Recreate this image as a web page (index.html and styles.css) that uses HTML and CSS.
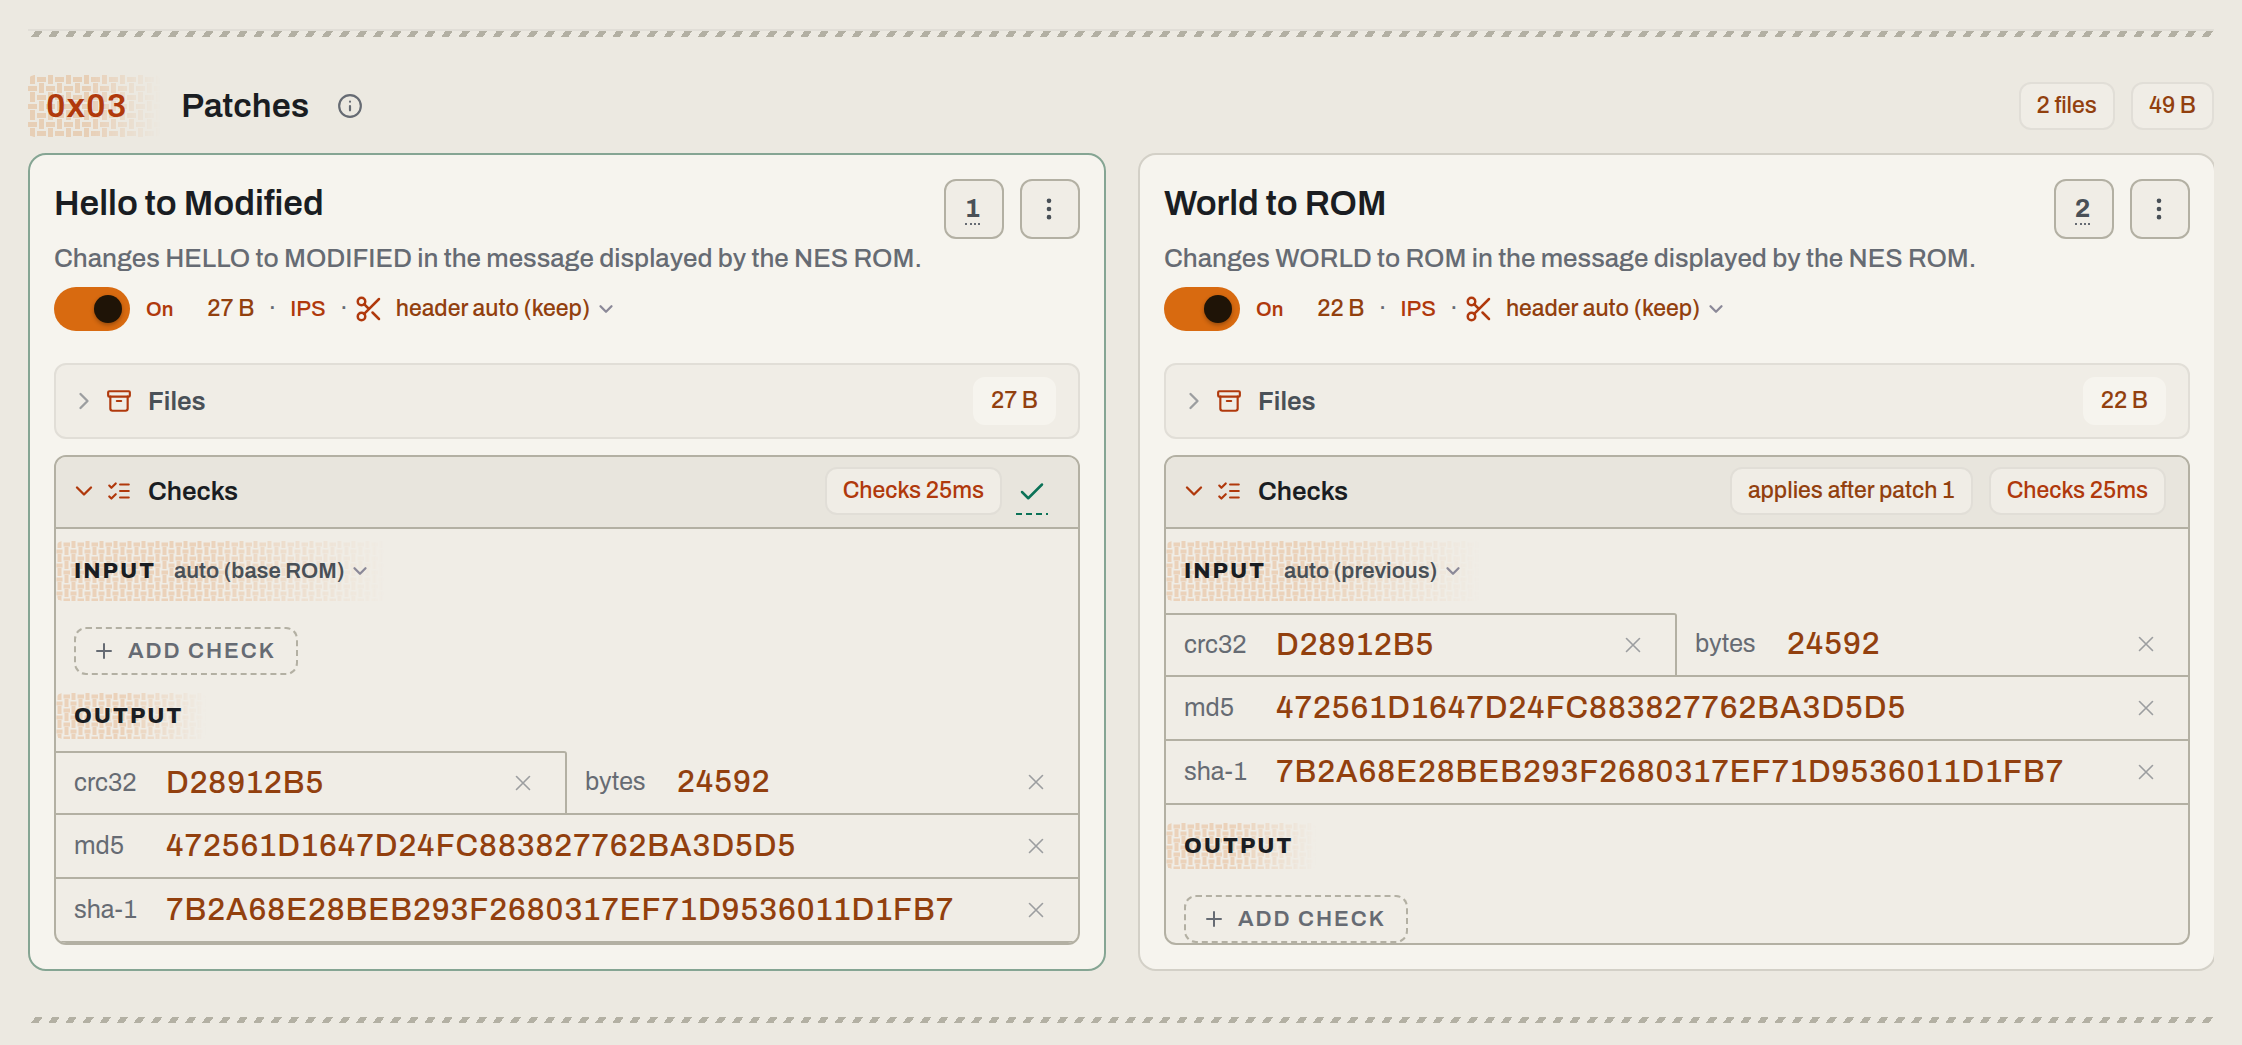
FILE: index.html
```html
<!DOCTYPE html>
<html lang="en">
<head>
    <meta charset="UTF-8">
    <meta name="viewport" content="width=device-width, initial-scale=1">
    <title>Patches</title>
    <link rel="stylesheet" href="styles.css">
</head>
<body>
    <!-- shared icons and the weave pattern -->
    <svg class="defs" aria-hidden="true">
        <defs>
            <pattern id="weave-lg" width="18" height="18" patternUnits="userSpaceOnUse">
                <path class="thread" d="M2 0h5v9H2zM2 17h5v1H2zM9 2h9v5H9zM11 8h5v10h-5zM0 11h9v5H0z"/>
            </pattern>
            <pattern id="weave-sm" width="14" height="14" patternUnits="userSpaceOnUse">
                <path class="thread" d="M1.5 0h4v7h-4zM1.5 13h4v1h-4zM7.5 1.5h6.500v4H7.500zM8.500 6h4v8h-4zM.5 8.500h6v4H.5z"/>
            </pattern>
            <symbol id="i-info" viewBox="0 0 24 24"><circle cx="12" cy="12" r="10"/><path d="M12 16v-4M12 8h.01"/></symbol>
            <symbol id="i-more" viewBox="0 0 24 24"><circle cx="12" cy="12" r="1"/><circle cx="12" cy="5" r="1"/><circle cx="12" cy="19" r="1"/></symbol>
            <symbol id="i-scissors" viewBox="0 0 24 24"><circle cx="6" cy="6" r="3"/><path d="M8.120 8.120 12 12M20 4 8.120 15.880"/><circle cx="6" cy="18" r="3"/><path d="M14.800 14.800 20 20"/></symbol>
            <symbol id="i-down" viewBox="0 0 24 24"><path d="m6 9 6 6 6-6"/></symbol>
            <symbol id="i-right" viewBox="0 0 24 24"><path d="m9 18 6-6-6-6"/></symbol>
            <symbol id="i-archive" viewBox="0 0 24 24"><rect width="20" height="5" x="2" y="3" rx="1"/><path d="M4 8v11a2 2 0 0 0 2 2h12a2 2 0 0 0 2-2V8M10 12h4"/></symbol>
            <symbol id="i-list" viewBox="0 0 24 24"><path d="m3 17 2 2 4-4M3 7l2 2 4-4M13 6h8M13 12h8M13 18h8"/></symbol>
            <symbol id="i-check" viewBox="0 0 24 24"><path d="M20 6 9 17l-5-5"/></symbol>
            <symbol id="i-x" viewBox="0 0 24 24"><path d="M18 6 6 18M6 6l12 12"/></symbol>
            <symbol id="i-plus" viewBox="0 0 24 24"><path d="M5 12h14M12 5v14"/></symbol>
        </defs>
    </svg>

    <main class="page">
        <div class="divider divider-line"></div>

        <section class="patches">
            <header class="section-head">
                <span class="section-no weave-box">
                    <svg class="weave" aria-hidden="true"><rect width="100%" height="100%" fill="url(#weave-lg)"/></svg>
                    <span class="weave-text">0x03</span>
                </span>
                <h2 class="section-title">Patches</h2>
                <button class="info-btn" aria-label="About patches"><svg class="icon icon-26"><use href="#i-info"/></svg></button>
                <div class="badges">
                    <span class="badge">2 files</span>
                    <span class="badge">49 B</span>
                </div>
            </header>

            <div class="cards">
                <article class="card card-active">
                    <div class="card-head">
                        <h3 class="card-title">Hello to Modified</h3>
                        <button class="square-btn"><span class="order">1</span></button>
                        <button class="square-btn" aria-label="More"><svg class="icon icon-28"><use href="#i-more"/></svg></button>
                    </div>
                    <p class="card-desc">Changes HELLO to MODIFIED in the message displayed by the NES ROM.</p>
                    <div class="meta">
                        <input class="switch" type="checkbox" role="switch" id="on-1" checked>
                        <label class="switch-label" for="on-1">On</label>
                        <span>27 B</span>
                        <span class="dot">·</span>
                        <span class="format">IPS</span>
                        <span class="dot">·</span>
                        <svg class="icon icon-30 accent"><use href="#i-scissors"/></svg>
                        <span class="pick">
                            <select aria-label="Header"><option>header auto (keep)</option></select>
                            <svg class="icon icon-22"><use href="#i-down"/></svg>
                        </span>
                    </div>

                    <section class="panel">
                        <div class="panel-head">
                            <button class="panel-toggle">
                                <svg class="icon icon-28 faint"><use href="#i-right"/></svg>
                                <svg class="icon icon-26 accent"><use href="#i-archive"/></svg>
                                <span>Files</span>
                            </button>
                            <span class="badge badge-light">27 B</span>
                        </div>
                    </section>

                    <section class="panel panel-open">
                        <div class="panel-head">
                            <button class="panel-toggle">
                                <svg class="icon icon-28 accent"><use href="#i-down"/></svg>
                                <svg class="icon icon-26 accent"><use href="#i-list"/></svg>
                                <span>Checks</span>
                            </button>
                            <span class="badge badge-time">Checks 25ms</span>
                            <button class="passed" aria-label="Passed"><svg class="icon icon-30"><use href="#i-check"/></svg></button>
                        </div>

                        <div class="group group-input weave-box">
                            <svg class="weave" aria-hidden="true"><rect width="100%" height="100%" fill="url(#weave-sm)"/></svg>
                            <label class="group-name" for="input-1">INPUT</label>
                            <span class="pick pick-sm">
                                <select id="input-1"><option>auto (base ROM)</option></select>
                                <svg class="icon icon-22"><use href="#i-down"/></svg>
                            </span>
                        </div>
                        <button class="add-check"><svg class="icon icon-24"><use href="#i-plus"/></svg>ADD CHECK</button>

                        <div class="group group-output weave-box">
                            <svg class="weave" aria-hidden="true"><rect width="100%" height="100%" fill="url(#weave-sm)"/></svg>
                            <span class="group-name">OUTPUT</span>
                        </div>
                        <dl class="checks">
                            <div class="check check-first"><dt>crc32</dt><dd>D28912B5</dd><button aria-label="Remove crc32"><svg class="icon icon-26"><use href="#i-x"/></svg></button></div>
                            <div class="check check-half"><dt>bytes</dt><dd>24592</dd><button aria-label="Remove bytes"><svg class="icon icon-26"><use href="#i-x"/></svg></button></div>
                            <div class="check"><dt>md5</dt><dd>472561D1647D24FC883827762BA3D5D5</dd><button aria-label="Remove md5"><svg class="icon icon-26"><use href="#i-x"/></svg></button></div>
                            <div class="check"><dt>sha-1</dt><dd>7B2A68E28BEB293F2680317EF71D9536011D1FB7</dd><button aria-label="Remove sha-1"><svg class="icon icon-26"><use href="#i-x"/></svg></button></div>
                        </dl>
                    </section>
                </article>

                <article class="card">
                    <div class="card-head">
                        <h3 class="card-title">World to ROM</h3>
                        <button class="square-btn"><span class="order">2</span></button>
                        <button class="square-btn" aria-label="More"><svg class="icon icon-28"><use href="#i-more"/></svg></button>
                    </div>
                    <p class="card-desc">Changes WORLD to ROM in the message displayed by the NES ROM.</p>
                    <div class="meta">
                        <input class="switch" type="checkbox" role="switch" id="on-2" checked>
                        <label class="switch-label" for="on-2">On</label>
                        <span>22 B</span>
                        <span class="dot">·</span>
                        <span class="format">IPS</span>
                        <span class="dot">·</span>
                        <svg class="icon icon-30 accent"><use href="#i-scissors"/></svg>
                        <span class="pick">
                            <select aria-label="Header"><option>header auto (keep)</option></select>
                            <svg class="icon icon-22"><use href="#i-down"/></svg>
                        </span>
                    </div>

                    <section class="panel">
                        <div class="panel-head">
                            <button class="panel-toggle">
                                <svg class="icon icon-28 faint"><use href="#i-right"/></svg>
                                <svg class="icon icon-26 accent"><use href="#i-archive"/></svg>
                                <span>Files</span>
                            </button>
                            <span class="badge badge-light">22 B</span>
                        </div>
                    </section>

                    <section class="panel panel-open">
                        <div class="panel-head">
                            <button class="panel-toggle">
                                <svg class="icon icon-28 accent"><use href="#i-down"/></svg>
                                <svg class="icon icon-26 accent"><use href="#i-list"/></svg>
                                <span>Checks</span>
                            </button>
                            <span class="badge">applies after patch 1</span>
                            <span class="badge badge-time">Checks 25ms</span>
                        </div>

                        <div class="group group-input weave-box">
                            <svg class="weave" aria-hidden="true"><rect width="100%" height="100%" fill="url(#weave-sm)"/></svg>
                            <label class="group-name" for="input-2">INPUT</label>
                            <span class="pick pick-sm">
                                <select id="input-2"><option>auto (previous)</option></select>
                                <svg class="icon icon-22"><use href="#i-down"/></svg>
                            </span>
                        </div>
                        <dl class="checks">
                            <div class="check check-first"><dt>crc32</dt><dd>D28912B5</dd><button aria-label="Remove crc32"><svg class="icon icon-26"><use href="#i-x"/></svg></button></div>
                            <div class="check check-half"><dt>bytes</dt><dd>24592</dd><button aria-label="Remove bytes"><svg class="icon icon-26"><use href="#i-x"/></svg></button></div>
                            <div class="check"><dt>md5</dt><dd>472561D1647D24FC883827762BA3D5D5</dd><button aria-label="Remove md5"><svg class="icon icon-26"><use href="#i-x"/></svg></button></div>
                            <div class="check"><dt>sha-1</dt><dd>7B2A68E28BEB293F2680317EF71D9536011D1FB7</dd><button aria-label="Remove sha-1"><svg class="icon icon-26"><use href="#i-x"/></svg></button></div>
                        </dl>

                        <div class="group group-output weave-box">
                            <svg class="weave" aria-hidden="true"><rect width="100%" height="100%" fill="url(#weave-sm)"/></svg>
                            <span class="group-name">OUTPUT</span>
                        </div>
                        <button class="add-check"><svg class="icon icon-24"><use href="#i-plus"/></svg>ADD CHECK</button>
                    </section>
                </article>
            </div>
        </section>

        <div class="divider"></div>
    </main>
</body>
</html>
```
FILE: styles.css
```css
:root {
    --bg: #ece9e1;
    --card: #f6f4ee;
    --panel: #f0ede6;
    --panel-head: #e8e5dd;
    --line: #b3b0a3;
    --line-soft: #e1ded7;
    --ink: #1a1d22;
    --ink-2: #495057;
    --ink-3: #666b73;
    --rust: #92400e;
    --accent: #b0390c;
    --green: #0b7257;
}

* {
    box-sizing: border-box;
}

body {
    margin: 0;
    background: var(--bg);
    color: var(--ink);
    font-family: Archivo, Roboto, "Liberation Sans", sans-serif;
    font-size: 23px;
    font-weight: 500;
    line-height: 36px;
}

h2, h3, p, dl, dd {
    margin: 0;
}

button, select {
    margin: 0;
    padding: 0;
    border: 0;
    background: none;
    color: inherit;
    font: inherit;
    cursor: pointer;
}

.defs {
    position: absolute;
    width: 0;
    height: 0;
}

.page {
    padding: 29px 28px 22px;
}

/* striped rule */
.divider {
    height: 6px;
    background: repeating-linear-gradient(125deg, transparent 0 6px, var(--line) 6px 12px, transparent 12px 14px);
}

.divider-line {
    height: 8px;
    border-top: 2px solid var(--line-soft);
    background-clip: padding-box;
}

/* icons */
.icon {
    flex: none;
    fill: none;
    stroke: currentColor;
    stroke-width: 2;
    stroke-linecap: round;
    stroke-linejoin: round;
}

.icon-22 { width: 22px; height: 22px; }
.icon-24 { width: 24px; height: 24px; }
.icon-26 { width: 26px; height: 26px; }
.icon-28 { width: 28px; height: 28px; }
.icon-30 { width: 30px; height: 30px; }

.accent { color: var(--accent); }
.faint { color: #9c9ea0; }

/* woven background that fades out to the right */
.weave-box {
    position: relative;
}

.thread {
    fill: #d86a10;
}

.weave {
    position: absolute;
    inset: 0;
    width: 100%;
    height: 100%;
    border-radius: 6px;
    opacity: 0.2;
    -webkit-mask-image: linear-gradient(90deg, #000 45%, transparent);
    mask-image: linear-gradient(90deg, #000 45%, transparent);
}

.weave-text,
.group-name,
.group .pick {
    position: relative;
}

/* section header */
.section-head {
    display: flex;
    align-items: center;
    margin: 38px 0 16px;
}

.section-no {
    padding: 0 34px 0 18px;
    color: var(--accent);
    font-size: 34px;
    font-weight: 600;
    line-height: 62px;
    letter-spacing: 1px;
}

.section-title {
    margin-left: 20px;
    font-size: 34px;
    font-weight: 600;
    line-height: 44px;
}

.info-btn {
    display: flex;
    margin-left: 28px;
    color: var(--ink-3);
}

.badges {
    display: flex;
    gap: 16px;
    margin-left: auto;
}

.badge {
    height: 48px;
    padding: 0 16px;
    border: 2px solid var(--line-soft);
    border-radius: 12px;
    background: var(--panel);
    color: var(--rust);
    line-height: 44px;
    white-space: nowrap;
}

.badge-light {
    border-color: var(--card);
    background: var(--card);
}

.badge-time {
    color: var(--accent);
}

/* cards */
.cards {
    display: flex;
    gap: 32px;
    margin-bottom: 46px;
    overflow: hidden;
}

.card {
    flex: 0 0 calc(50% - 15px);
    min-width: 0;
    padding: 24px;
    border: 2px solid #d3d0c7;
    border-radius: 18px;
    background: var(--card);
}

.card-active {
    border-color: #85a593;
}

.card-head {
    display: flex;
    gap: 16px;
}

.card-title {
    flex: 1;
    font-size: 35px;
    font-weight: 600;
    line-height: 48px;
}

.square-btn {
    display: flex;
    align-items: center;
    justify-content: center;
    width: 60px;
    height: 60px;
    padding-right: 3px;
    border: 2px solid var(--line);
    border-radius: 12px;
    background: var(--panel);
    color: var(--ink-2);
}

.order {
    border-bottom: 2px dotted var(--ink-3);
    font-size: 26px;
    font-weight: 700;
    line-height: 30px;
}

.card-desc {
    color: var(--ink-3);
    font-size: 26px;
    line-height: 38px;
}

.meta {
    display: flex;
    align-items: center;
    height: 44px;
    margin: 10px 0 32px;
    color: var(--rust);
}

.switch {
    display: flex;
    width: 76px;
    height: 44px;
    margin: 0;
    padding: 8px;
    border-radius: 22px;
    background: #d86a10;
    appearance: none;
    cursor: pointer;
}

.switch::before {
    content: "";
    width: 28px;
    height: 28px;
    border-radius: 50%;
    background: #1f1407;
    box-shadow: 0 2px 4px rgba(0, 0, 0, 0.3);
}

.switch:checked::before {
    margin-left: auto;
}

.switch-label {
    margin: 0 34px 0 16px;
    color: var(--accent);
    font-size: 20px;
    font-weight: 600;
}

.format {
    color: var(--accent);
    font-size: 22px;
}

.dot {
    width: 36px;
    color: var(--ink-3);
    text-align: center;
}

.dot + .icon {
    margin-left: -8px;
}

.pick {
    display: inline-flex;
    align-items: center;
    gap: 4px;
    margin-left: 12px;
}

.pick select {
    appearance: none;
}

.pick .icon {
    color: #8b8998;
    stroke-width: 2.5;
    pointer-events: none;
}

.pick-sm {
    margin-left: 18px;
    color: var(--ink-2);
    font-size: 22px;
    font-weight: 600;
}

/* panels */
.panel {
    border: 2px solid var(--line-soft);
    border-radius: 12px;
    background: var(--panel);
    overflow: hidden;
}

.panel-open {
    margin-top: 16px;
    border-color: var(--line);
}

.panel-head {
    display: flex;
    align-items: center;
    gap: 16px;
    padding: 12px 22px 12px 14px;
}

.panel-open .panel-head {
    padding-top: 10px;
    border-bottom: 2px solid var(--line);
    background: var(--panel-head);
}

.panel-toggle {
    display: flex;
    flex: 1;
    align-items: center;
    gap: 8px;
    color: var(--ink-2);
    font-size: 26px;
    font-weight: 600;
    text-align: left;
}

.panel-toggle span {
    margin-left: 8px;
}

.panel-open .panel-toggle {
    color: var(--ink);
}

.passed {
    display: flex;
    justify-content: center;
    width: 32px;
    height: 48px;
    margin: 0 8px 0 -2px;
    padding-top: 10px;
    background: repeating-linear-gradient(90deg, var(--green) 0 6px, transparent 6px 10px) bottom / 100% 2px no-repeat;
    color: var(--green);
}

.group {
    display: flex;
    align-items: center;
    width: fit-content;
    padding: 0 18px;
}

.group-input {
    height: 60px;
    margin-top: 12px;
}

.group-output {
    height: 46px;
    margin-top: 18px;
    padding-right: 24px;
}

.group-name {
    font-size: 22px;
    font-weight: 800;
    letter-spacing: 2px;
}

.add-check {
    display: flex;
    align-items: center;
    gap: 12px;
    height: 48px;
    margin: 26px 0 0 18px;
    padding: 0 20px 0 16px;
    border: 2px dashed var(--line);
    border-radius: 12px;
    color: var(--ink-3);
    font-size: 22px;
    font-weight: 600;
    letter-spacing: 2px;
}

/* checksum rows */
.checks {
    display: grid;
    grid-template-columns: 1fr 1fr;
    margin-top: 12px;
}

.check {
    display: flex;
    grid-column: 1 / -1;
    align-items: center;
    height: 64px;
    padding: 0 20px 0 18px;
    border-bottom: 2px solid var(--line);
}

.check-first {
    grid-column: 1;
    border-top: 2px solid var(--line);
    border-right: 2px solid var(--line);
    border-top-right-radius: 3px;
}

.check-half {
    grid-column: 2;
}

.check dt {
    width: 92px;
    color: var(--ink-3);
    font-size: 25px;
    font-weight: 400;
}

.check dd {
    flex: 1;
    color: var(--rust);
    font-size: 31px;
    letter-spacing: 1px;
}

.check button {
    display: flex;
    align-items: center;
    justify-content: center;
    width: 44px;
    height: 44px;
    color: #9c9ea0;
}

.check .icon {
    stroke-width: 1.5;
}
```
